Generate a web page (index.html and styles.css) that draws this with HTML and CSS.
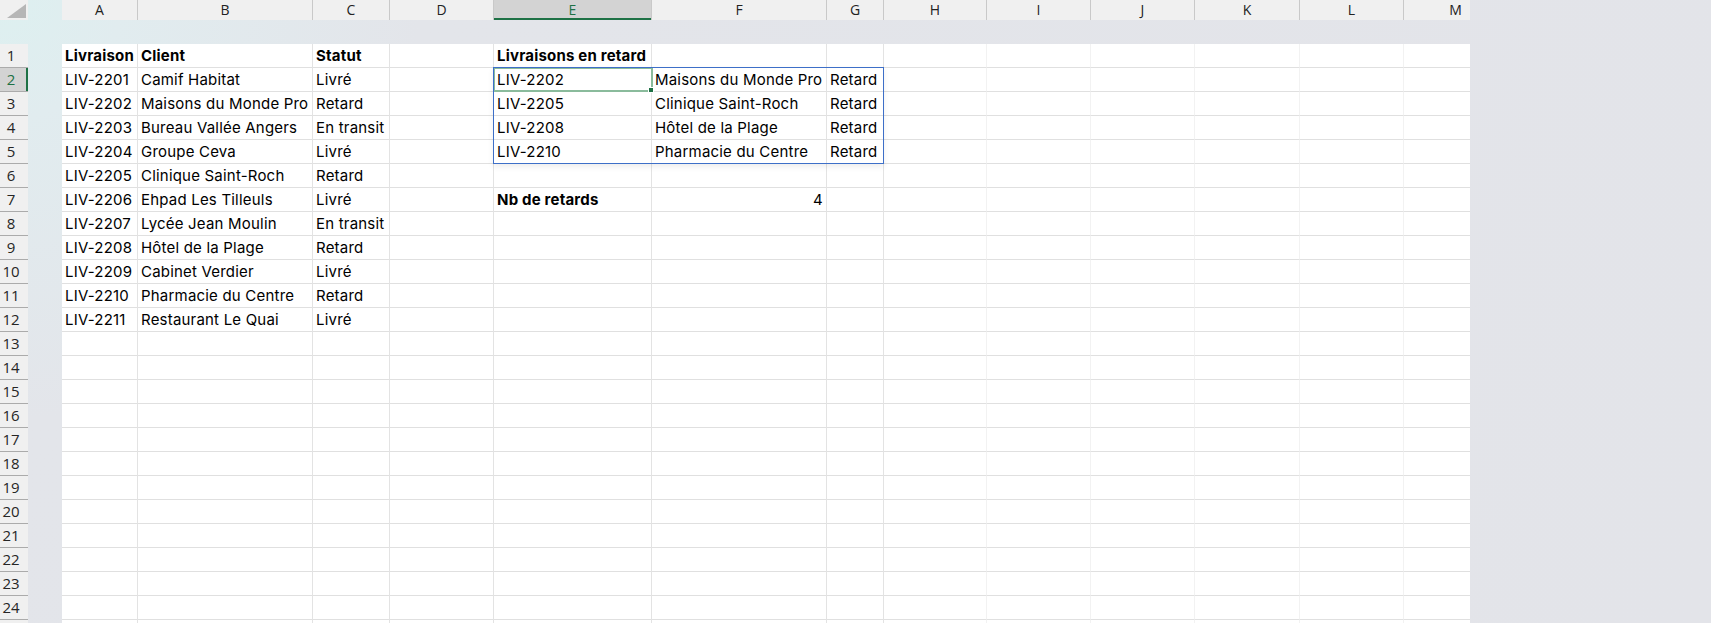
FILE: index.html
```html
<!DOCTYPE html>
<html lang="fr">
<head>
  <meta charset="UTF-8" />
  <meta name="viewport" content="width=device-width, initial-scale=1.0"/>
  <title>Livraisons</title>
  <link rel="stylesheet" href="styles.css">
</head>
<body>

  <div class="window">
    <div class="row-headers" id="rowHeaders">
      <div class="corner"><span class="corner-tri"></span></div>
      <div class="band"></div>
    </div>

    <div class="sheet">
      <div class="col-headers" id="colHeaders"></div>
      <div class="band"></div>
      <div class="grid" id="grid">
        <div class="active-cell"><span class="fill-handle"></span></div>
        <div class="range"></div>
      </div>
    </div>
  </div>

  <script>
    const cols = ["A", "B", "C", "D", "E", "F", "G", "H", "I", "J", "K", "L", "M"];
    const rowCount = 24;

    const cells = {
      A1: "Livraison", B1: "Client", C1: "Statut", E1: "Livraisons en retard",
      A2: "LIV-2201", B2: "Camif Habitat", C2: "Livré",
      A3: "LIV-2202", B3: "Maisons du Monde Pro", C3: "Retard",
      A4: "LIV-2203", B4: "Bureau Vallée Angers", C4: "En transit",
      A5: "LIV-2204", B5: "Groupe Ceva", C5: "Livré",
      A6: "LIV-2205", B6: "Clinique Saint-Roch", C6: "Retard",
      A7: "LIV-2206", B7: "Ehpad Les Tilleuls", C7: "Livré",
      A8: "LIV-2207", B8: "Lycée Jean Moulin", C8: "En transit",
      A9: "LIV-2208", B9: "Hôtel de la Plage", C9: "Retard",
      A10: "LIV-2209", B10: "Cabinet Verdier", C10: "Livré",
      A11: "LIV-2210", B11: "Pharmacie du Centre", C11: "Retard",
      A12: "LIV-2211", B12: "Restaurant Le Quai", C12: "Livré",
      E2: "LIV-2202", F2: "Maisons du Monde Pro", G2: "Retard",
      E3: "LIV-2205", F3: "Clinique Saint-Roch", G3: "Retard",
      E4: "LIV-2208", F4: "Hôtel de la Plage", G4: "Retard",
      E5: "LIV-2210", F5: "Pharmacie du Centre", G5: "Retard",
      E7: "Nb de retards", F7: 4
    };
    const bold = ["A1", "B1", "C1", "E1", "E7"];
    const activeCol = "E";
    const activeRow = 2;

    const colHeaders = document.getElementById("colHeaders");
    cols.forEach(c => {
      const div = document.createElement("div");
      div.className = "ch" + (c === activeCol ? " sel" : "");
      div.textContent = c;
      colHeaders.appendChild(div);
    });

    const rowHeaders = document.getElementById("rowHeaders");
    const grid = document.getElementById("grid");
    // one extra row so the sheet runs on past the bottom edge
    for (let r = 1; r <= rowCount + 1; r++) {
      const rh = document.createElement("div");
      rh.className = "rh" + (r === activeRow ? " sel" : "");
      if (r <= rowCount) rh.textContent = r;
      rowHeaders.appendChild(rh);

      const row = document.createElement("div");
      row.className = "row";
      cols.forEach((c, i) => {
        const key = c + r;
        const cell = document.createElement("div");
        cell.className = "cell";
        if (i >= 7) cell.classList.add("far");
        if (bold.includes(key)) cell.classList.add("bold");
        const val = cells[key];
        if (typeof val === "number") cell.classList.add("num");
        if (val !== undefined) cell.textContent = val;
        row.appendChild(cell);
      });
      grid.appendChild(row);
    }
  </script>
</body>
</html>
```

FILE: styles.css
```css
:root {
  --cols: 76px 175px 77px 104px 158px 175px 57px 103px 104px 104px 105px 104px 104px;
  --green: #1e7145;
}
body {
  margin: 0;
  width: 1711px;
  height: 623px;
  overflow: hidden;
  background: radial-gradient(circle at 0 0, #ddf0f0 0, #e1ecef 120px, #e3e5ea 420px, #e3e4e9 100%);
  font-family: 'Open Sans', 'Noto Sans', sans-serif;
}
.window {
  display: flex;
  align-items: flex-start;
}
.row-headers {
  width: 28px;
  margin-right: 34px;
}
.corner {
  height: 20px;
  background: #f0f0f0;
  display: flex;
  justify-content: flex-end;
  align-items: flex-end;
  padding: 0 2px 2px 0;
  box-sizing: border-box;
}
.corner-tri {
  width: 0;
  height: 0;
  border-left: 19px solid transparent;
  border-bottom: 14px solid #b6b6b6;
}
.band {
  height: 24px;
}
.rh {
  height: 24px;
  box-sizing: border-box;
  border-bottom: 1px solid #ababab;
  background: #f0f0f0;
  color: #262626;
  font-size: 15px;
  line-height: 23px;
  text-align: center;
  padding-right: 6px;
}
.rh.sel {
  background: #d3d3d3;
  color: var(--green);
  box-shadow: inset -2px 0 var(--green);
}
.sheet {
  width: 1408px;
  overflow: hidden;
}
.col-headers {
  display: grid;
  grid-template-columns: var(--cols);
  height: 20px;
  background: #f0f0f0;
}
.ch {
  border-right: 1px solid #c9c9c9;
  color: #222;
  font-size: 14px;
  line-height: 20px;
  text-align: center;
}
.ch.sel {
  background: #d3d3d3;
  color: var(--green);
  box-shadow: inset 0 -2px var(--green);
}
.grid {
  position: relative;
  background: #fff;
}
.row {
  display: grid;
  grid-template-columns: var(--cols);
  height: 24px;
}
.cell {
  box-sizing: border-box;
  border-right: 1px solid #e3e3e3;
  border-bottom: 1px solid #e0e0e0;
  padding: 0 3px;
  font-family: 'Inter', sans-serif;
  font-size: 15px;
  letter-spacing: 0.2px;
  line-height: 23px;
  color: #000;
  white-space: nowrap;
}
.cell.far {
  border-right-color: #f2f2f2;
}
.cell.bold {
  font-weight: bold;
}
.cell.num {
  text-align: right;
}
.active-cell {
  position: absolute;
  left: 431px;
  top: 23px;
  width: 160px;
  height: 25px;
  box-sizing: border-box;
  border: 2px solid #8abb9c;
}
.fill-handle {
  position: absolute;
  right: -3px;
  bottom: -3px;
  width: 4px;
  height: 4px;
  background: var(--green);
  border: 1px solid #fff;
}
.range {
  position: absolute;
  left: 431px;
  top: 23px;
  width: 391px;
  height: 97px;
  box-sizing: border-box;
  border: 1px solid #3d6fc8;
  box-shadow: 0 3px 6px rgba(0, 0, 0, 0.07);
}
```
